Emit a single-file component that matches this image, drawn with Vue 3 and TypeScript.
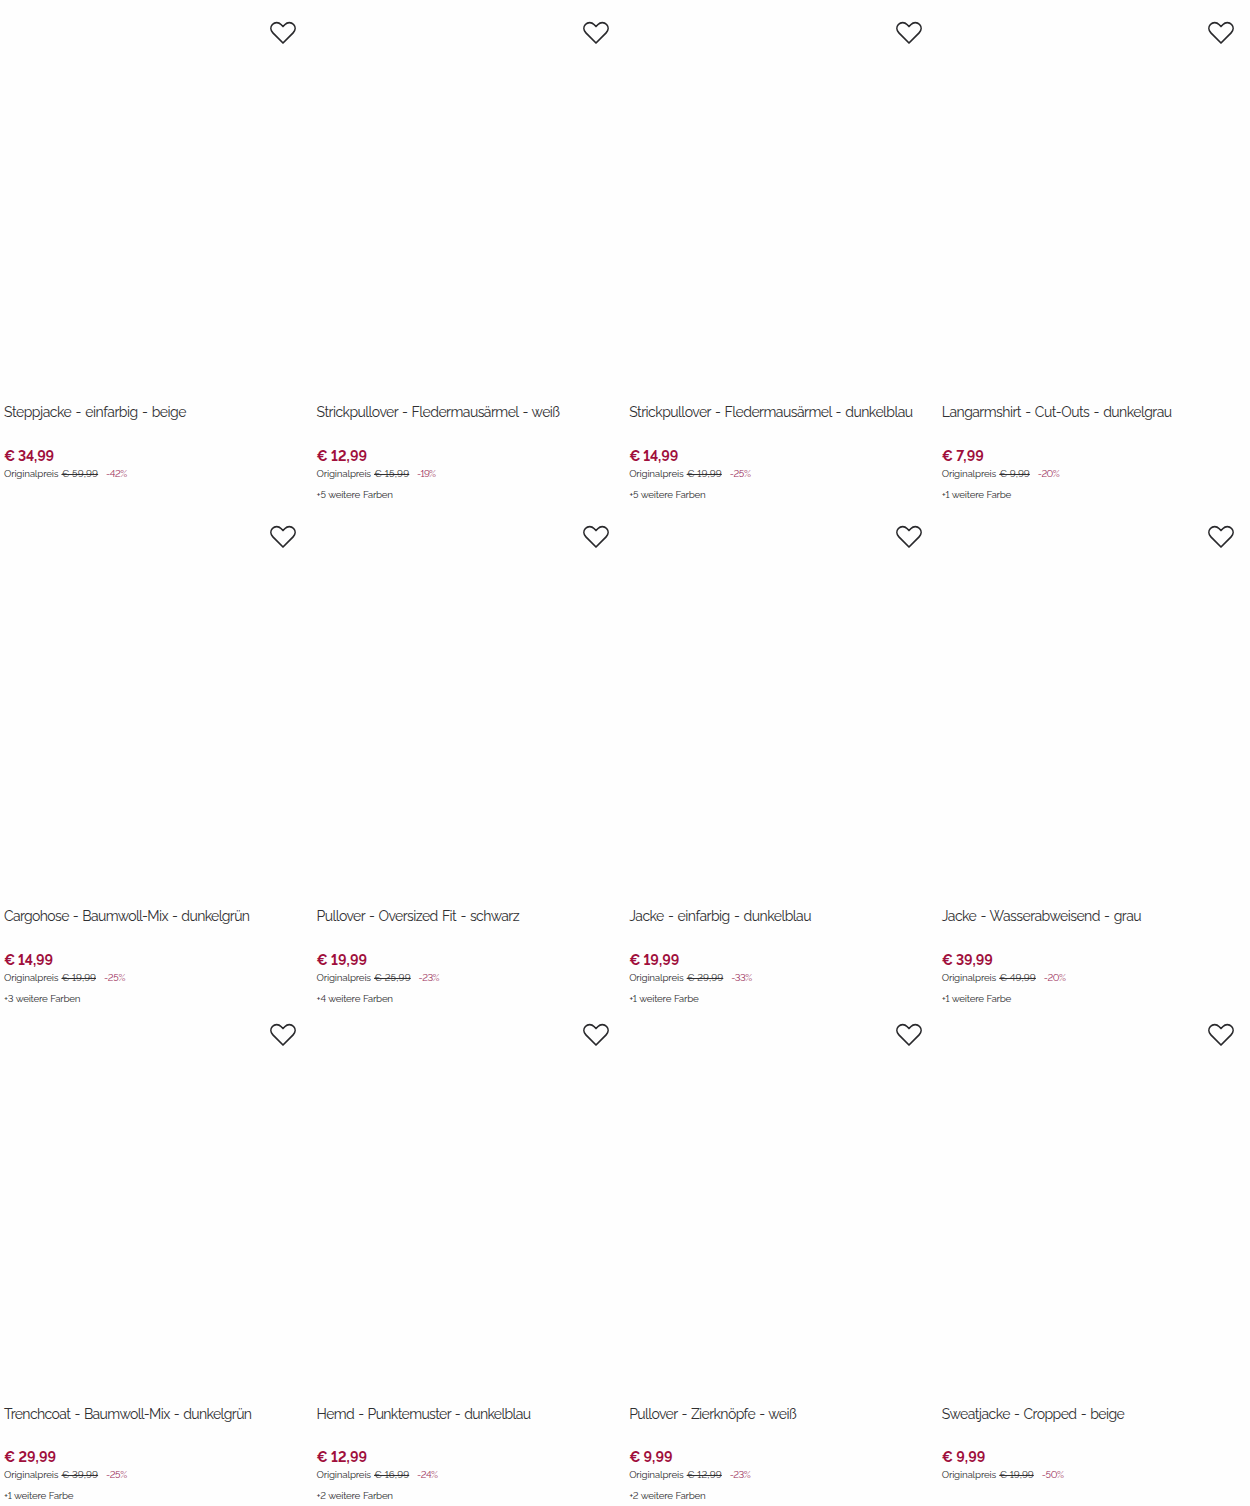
<script setup lang="ts">
import type { Directive } from 'vue'

interface Product {
  name: string
  nameWidth: number
  price: string
  priceWidth: number
  original: string
  originalWidth: number
  discount: string
  discountWidth: number
  colors?: number
}

const p = (
  name: string, nameWidth: number,
  price: string, priceWidth: number,
  original: string, originalWidth: number,
  discount: string, discountWidth: number,
  colors?: number,
): Product => ({ name, nameWidth, price, priceWidth, original, originalWidth, discount, discountWidth, colors })

const rows: Product[][] = [
  [
    p('Steppjacke - einfarbig - beige', 182.5, '34,99', 50, '59,99', 36.5, '42', 21.2),
    p('Strickpullover - Fledermausärmel - weiß', 243.5, '12,99', 50.5, '15,99', 35, '19', 19, 5),
    p('Strickpullover - Fledermausärmel - dunkelblau', 284, '14,99', 49, '19,99', 35, '25', 21.2, 5),
    p('Langarmshirt - Cut-Outs - dunkelgrau', 230.3, '7,99', 42, '9,99', 30.5, '20', 22, 1),
  ],
  [
    p('Cargohose - Baumwoll-Mix - dunkelgrün', 246, '14,99', 49, '19,99', 34.5, '25', 21.5, 3),
    p('Pullover - Oversized Fit - schwarz', 203, '19,99', 50.5, '25,99', 36.5, '23', 21, 4),
    p('Jacke - einfarbig - dunkelblau', 182.3, '19,99', 50, '29,99', 36.5, '33', 21, 1),
    p('Jacke - Wasserabweisend - grau', 199.8, '39,99', 51, '49,99', 36.5, '20', 22.2, 1),
  ],
  [
    p('Trenchcoat - Baumwoll-Mix - dunkelgrün', 248, '29,99', 52, '39,99', 36.5, '25', 21.2, 1),
    p('Hemd - Punktemuster - dunkelblau', 214.5, '12,99', 50.5, '16,99', 35, '24', 21, 2),
    p('Pullover - Zierknöpfe - weiß', 167.5, '9,99', 43.3, '12,99', 35, '23', 21, 2),
    p('Sweatjacke - Cropped - beige', 183, '9,99', 43.5, '19,99', 34.5, '50', 22.3),
  ],
]

// Tracks the text so that it fills the given width in pixels.
const vTrack: Directive<HTMLElement, number> = {
  mounted(el, { value }) {
    const count = el.textContent?.length ?? 0
    if (count < 2) return
    const spacing = (value - el.getBoundingClientRect().width) / (count - 1)
    el.style.letterSpacing = `${spacing}px`
    el.style.marginRight = `${-spacing}px`
  },
}
</script>

<template>
  <main class="listing">
    <section v-for="(row, r) in rows" :key="r" class="row">
      <article v-for="item in row" :key="item.name" class="card">
        <div class="picture">
          <button class="wish" type="button" aria-label="Merken">
            <svg width="28" height="24" viewBox="0 0 28 24" fill="none">
              <path d="M14 22 3.9 11.9C1.4 9.3 1.3 5.7 3.4 3.5 5.8 1.1 9.6 1.1 12 3.5L14 5.5 16 3.5C18.4 1.1 22.2 1.1 24.6 3.5 26.7 5.7 26.6 9.3 24.1 11.9Z" stroke="#29292c" stroke-width="1.7" stroke-linejoin="round" />
            </svg>
          </button>
        </div>
        <h2 class="name"><span v-track="item.nameWidth">{{ item.name }}</span></h2>
        <div class="price"><span v-track="item.priceWidth">€ {{ item.price }}</span></div>
        <div class="before">
          <span class="label"><span v-track="54.5">Originalpreis</span></span>
          <s class="old"><span v-track="item.originalWidth">€ {{ item.original }}</span></s>
          <span class="discount"><span v-track="item.discountWidth">-{{ item.discount }}%</span></span>
        </div>
        <div v-if="item.colors" class="colors">
          <span v-track="item.colors > 1 ? 76.5 : 69.5">+{{ item.colors }} {{ item.colors > 1 ? 'weitere Farben' : 'weitere Farbe' }}</span>
        </div>
      </article>
    </section>
  </main>
</template>

<style>
body {
  margin: 0;
  background: #fefefe;
}
</style>

<style scoped>
.listing {
  width: 1250px;
  height: 1506px;
  overflow: hidden;
  font-family: Raleway, Lato, "Open Sans", sans-serif;
  font-variant-numeric: lining-nums;
  color: #303032;
}
.row {
  display: grid;
  grid-template-columns: repeat(4, 312.6px);
  height: 504px;
}
.row:nth-child(2) {
  height: 497.5px;
}
.card {
  padding-left: 4px;
  white-space: nowrap;
}
.picture {
  display: flex;
  justify-content: flex-end;
  height: 402px;
  padding: 21px 15.2px 0 0;
  box-sizing: border-box;
}
.wish {
  width: 28px;
  height: 24px;
  padding: 0;
  border: 0;
  background: none;
}
.wish svg {
  display: block;
}
.name {
  height: 43.5px;
  margin: 0;
  font-size: 14px;
  font-weight: 400;
  line-height: 20px;
  word-spacing: 1.2px;
}
.price {
  height: 20px;
  font-size: 14px;
  font-weight: 700;
  line-height: 20px;
  word-spacing: -0.3px;
  color: #a00f3c;
}
.before {
  display: flex;
  height: 16px;
  font-size: 9.8px;
  line-height: 16px;
}
.old {
  margin-left: 3px;
}
.discount {
  margin-left: 8px;
  color: #9c2f5a;
}
.colors {
  margin-top: 5.4px;
  font-size: 9.8px;
  line-height: 16px;
  word-spacing: 0.6px;
}
</style>
